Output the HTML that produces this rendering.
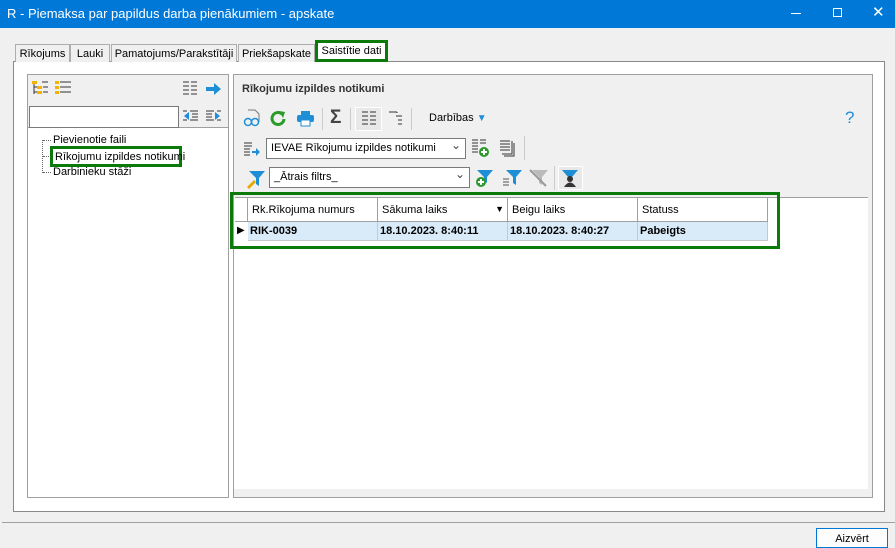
<!DOCTYPE html><html><head><meta charset="utf-8"><style>
*{box-sizing:border-box}body{margin:0;width:895px;height:544px;overflow:hidden;background:#f0f0f0;font-family:"Liberation Sans",sans-serif;font-size:11px;color:#000;position:relative;white-space:nowrap}
.a{position:absolute}
.tab{position:absolute;top:44px;height:18px;border:1px solid #adadad;border-bottom:none;background:#f0f0f0;padding:3px 0;font-size:11px;text-align:center}
.cb{position:absolute;background:#fff;border:1px solid #7a7a7a;height:21px;padding:3px 4px;font-size:11px;overflow:hidden}
.cb:after{content:"⌄";position:absolute;right:4px;top:-1px;font-size:12px;color:#444}
.th{position:absolute;top:198px;height:24px;border-right:1px solid #a0a0a0;padding:6px 4px;font-size:11px}
.td{position:absolute;top:222px;height:18px;padding:3px 2px;font-size:11px;font-weight:bold;border-right:1px solid #c8c8c8}
</style></head><body>
<div class="a" style="left:0;top:0;width:895px;height:28px;background:#0078d7;color:#fff;font-size:13px;padding:6px 7px">R - Piemaksa par papildus darba pienākumiem - apskate</div>
<div class="a" style="left:791px;top:13px;width:10px;height:1px;background:#fff"></div>
<div class="a" style="left:833px;top:8px;width:9px;height:9px;border:1px solid #fff"></div>
<div class="a" style="left:872px;top:3px;color:#fff;font-size:15px">✕</div>

<div class="a" style="left:13px;top:61px;width:872px;height:451px;background:#fff;border:1px solid #898989"></div>
<div class="tab" style="left:15px;width:55px">Rīkojums</div>
<div class="tab" style="left:70px;width:40px">Lauki</div>
<div class="tab" style="left:111px;width:126px">Pamatojums/Parakstītāji</div>
<div class="tab" style="left:238px;width:77px">Priekšapskate</div>
<div class="a" style="left:315px;top:40px;width:73px;height:22px;background:#fff;border:3px solid #0a7a0a;padding:2px 0;text-align:center;font-size:11px">Saistītie dati</div>

<!-- left panel -->
<div class="a" style="left:27px;top:74px;width:202px;height:424px;border:1px solid #a0a0a0;background:#f0f0f0"></div>
<div class="a" style="left:28px;top:127px;width:200px;height:370px;background:#fff;border-top:1px solid #a0a0a0"></div>
<div class="a" style="left:32px;top:80px;width:16px;height:16px"><svg width="16" height="16"><rect x="0" y="1" width="5" height="3" fill="#f2b400"/><rect x="5" y="6" width="5" height="3" fill="#f2b400"/><rect x="5" y="11" width="5" height="3" fill="#f2b400"/><path d="M2 4v10M2 7h3M2 12h3M10 2h6M11 7h5M11 12h5" stroke="#333"/></svg></div>
<div class="a" style="left:55px;top:80px"><svg width="16" height="16"><rect x="0" y="1" width="4" height="3" fill="#f2b400"/><rect x="0" y="6" width="4" height="3" fill="#f2b400"/><rect x="0" y="11" width="4" height="3" fill="#f2b400"/><path d="M5 2h11M5 7h11M5 12h11" stroke="#333"/></svg></div>
<div class="a" style="left:182px;top:81px"><svg width="16" height="14"><path d="M1 1h6M1 5h6M1 9h6M1 13h6M9 1h6M9 5h6M9 9h6M9 13h6" stroke="#333"/></svg></div>
<div class="a" style="left:206px;top:83px"><svg width="16" height="12"><path d="M0 4h8V0l7 6-7 6V8H0z" fill="#1e8fd6"/></svg></div>
<div class="a" style="left:29px;top:106px;width:150px;height:22px;background:#fff;border:1px solid #7a7a7a"></div>
<div class="a" style="left:182px;top:110px"><svg width="16" height="12"><path d="M8 1h8M10 4h6M10 7h6M8 10h8M1 1h4M1 10h4" stroke="#333"/><path d="M7 2v8L2 6z" fill="#1e8fd6"/></svg></div>
<div class="a" style="left:206px;top:110px"><svg width="16" height="12"><path d="M0 1h8M0 4h6M0 7h6M0 10h8M11 1h4M11 10h4" stroke="#333"/><path d="M9 2v8l5-4z" fill="#1e8fd6"/></svg></div>
<div class="a" style="left:42px;top:140px;width:1px;height:33px;border-left:1px dotted #666"></div>
<div class="a" style="left:43px;top:140px;width:8px;border-top:1px dotted #666"></div>
<div class="a" style="left:43px;top:156px;width:8px;border-top:1px dotted #666"></div>
<div class="a" style="left:43px;top:172px;width:8px;border-top:1px dotted #666"></div>
<div class="a" style="left:53px;top:134px">Pievienotie faili</div>
<div class="a" style="left:50px;top:146px;width:132px;height:21px;border:3px solid #0a7a0a;padding:1px 2px;line-height:14px">Rīkojumu izpildes notikumi</div>
<div class="a" style="left:53px;top:166px">Darbinieku stāži</div>

<!-- right panel -->
<div class="a" style="left:233px;top:74px;width:640px;height:424px;border:1px solid #a0a0a0;background:#fff"></div>
<div class="a" style="left:234px;top:98px;width:634px;height:99px;background:#f0f0f0"></div>
<div class="a" style="left:234px;top:75px;width:638px;height:23px;background:#f0f0f0"></div>
<div class="a" style="left:242px;top:83px;font-weight:bold;color:#333">Rīkojumu izpildes notikumi</div>
<div class="a" style="left:234px;top:489px;width:638px;height:8px;background:#f0f0f0"></div>
<div class="a" style="left:868px;top:98px;width:4px;height:392px;background:#f0f0f0"></div>

<div class="a" style="left:243px;top:109px"><svg width="18" height="18"><path d="M5 1h7l4 4v8" fill="none" stroke="#777"/><circle cx="5" cy="13" r="3.5" fill="none" stroke="#1e8fd6" stroke-width="1.5"/><circle cx="12" cy="13" r="3.5" fill="none" stroke="#1e8fd6" stroke-width="1.5"/></svg></div>
<div class="a" style="left:270px;top:110px"><svg width="17" height="17"><path d="M14 9a6 6 0 1 1-2-5" fill="none" stroke="#2a9a2a" stroke-width="3"/><path d="M9 1l6 1-2 6z" fill="#2a9a2a"/></svg></div>
<div class="a" style="left:297px;top:110px"><svg width="17" height="17"><rect x="4" y="1" width="9" height="4" fill="#1e8fd6"/><rect x="0" y="5" width="17" height="7" rx="2" fill="#1e8fd6"/><rect x="4" y="10" width="9" height="6" fill="#fff" stroke="#1e8fd6"/></svg></div>
<div class="a" style="left:322px;top:108px;width:1px;height:22px;background:#ccc"></div>
<div class="a" style="left:330px;top:107px;font-size:19px;font-weight:bold;color:#444">Σ</div>
<div class="a" style="left:350px;top:108px;width:1px;height:22px;background:#ccc"></div>
<div class="a" style="left:355px;top:107px;width:27px;height:24px;border:1px solid #fff;background:#e8e8e8"></div>
<div class="a" style="left:361px;top:111px"><svg width="16" height="14"><path d="M1 1h6M1 5h6M1 9h6M1 13h6M9 1h6M9 5h6M9 9h6M9 13h6" stroke="#333"/></svg></div>
<div class="a" style="left:388px;top:111px"><svg width="16" height="16"><path d="M1 1h8M9 1v1M8 5h6M10 9h4M10 13h4" stroke="#333"/></svg></div>
<div class="a" style="left:411px;top:108px;width:1px;height:22px;background:#ccc"></div>
<div class="a" style="left:429px;top:112px">Darbības <span style="color:#1e8fd6;font-size:10px">▼</span></div>
<div class="a" style="left:845px;top:108px;font-size:17px;color:#1e8fd6">?</div>

<div class="a" style="left:243px;top:141px"><svg width="18" height="16"><path d="M1 2h8M1 5h8M1 8h6M1 11h6M1 14h6" stroke="#333"/><path d="M9 10h4V7l4 4-4 4v-3H9z" fill="#1e8fd6"/></svg></div>
<div class="cb" style="left:266px;top:138px;width:200px">IEVAE Rīkojumu izpildes notikumi</div>
<div class="a" style="left:471px;top:138px"><svg width="20" height="20"><path d="M1 2h6M1 5h6M1 8h6M1 11h6M1 14h6M9 2h6M9 5h6" stroke="#333"/><circle cx="13" cy="14" r="5" fill="#2a9a2a"/><path d="M13 11v6M10 14h6" stroke="#fff" stroke-width="2"/></svg></div>
<div class="a" style="left:499px;top:139px"><svg width="18" height="18"><path d="M1 2h10M1 5h10M1 8h10M1 11h10M13 2v13H3" stroke="#333" fill="none"/><path d="M15 4v13H5" stroke="#333" fill="none"/></svg></div>
<div class="a" style="left:524px;top:136px;width:1px;height:24px;background:#ccc"></div>

<div class="a" style="left:246px;top:169px"><svg width="20" height="20"><path d="M3 2h16l-6 7v8l-3-2V9z" fill="#1e8fd6"/><path d="M1 18l7-7 2 2-7 7z" fill="#e8a800"/></svg></div>
<div class="cb" style="left:269px;top:167px;width:201px">_Ātrais filtrs_</div>
<div class="a" style="left:475px;top:168px"><svg width="20" height="20"><path d="M2 2h16l-6 7v6l-3-2V9z" fill="#1e8fd6"/><circle cx="6" cy="14" r="5" fill="#2a9a2a"/><path d="M6 11v6M3 14h6" stroke="#fff" stroke-width="2"/></svg></div>
<div class="a" style="left:502px;top:168px"><svg width="20" height="20"><path d="M4 2h16l-6 7v8l-3-2V9z" fill="#1e8fd6"/><path d="M1 11h6M1 14h6M1 17h6" stroke="#555"/></svg></div>
<div class="a" style="left:528px;top:168px"><svg width="20" height="20"><path d="M4 2h16l-6 7v8l-3-2V9z" fill="#bbb"/><path d="M2 2l16 16" stroke="#999" stroke-width="2"/></svg></div>
<div class="a" style="left:554px;top:166px;width:1px;height:24px;background:#ccc"></div>
<div class="a" style="left:558px;top:166px;width:25px;height:24px;border:1px solid #fff;background:#e8e8e8"></div>
<div class="a" style="left:561px;top:169px"><svg width="18" height="18"><path d="M1 1h16l-6 7v3H7V8z" fill="#1e8fd6"/><circle cx="9" cy="10" r="3" fill="#333"/><path d="M3 18q6-9 12 0z" fill="#333"/></svg></div>

<!-- grid -->
<div class="a" style="left:235px;top:197px;width:633px;height:1px;background:#a0a0a0"></div>
<div class="a" style="left:235px;top:198px;width:533px;height:43px;border-right:1px solid #a0a0a0"></div>
<div class="a" style="left:235px;top:198px;width:13px;height:24px;border-right:1px solid #a0a0a0"></div>
<div class="th" style="left:248px;width:130px">Rk.Rīkojuma numurs</div>
<div class="th" style="left:378px;width:130px">Sākuma laiks<span style="position:absolute;right:3px;top:6px;font-size:9px">▼</span></div>
<div class="th" style="left:508px;width:130px">Beigu laiks</div>
<div class="th" style="left:638px;width:130px">Statuss</div>
<div class="a" style="left:235px;top:221px;width:533px;height:1px;background:#a0a0a0"></div>
<div class="a" style="left:248px;top:222px;width:520px;height:18px;background:#d9ebf9"></div>
<div class="a" style="left:237px;top:225px;font-size:10px">▶</div>
<div class="td" style="left:248px;width:130px">RIK-0039</div>
<div class="td" style="left:378px;width:130px">18.10.2023. 8:40:11</div>
<div class="td" style="left:508px;width:130px">18.10.2023. 8:40:27</div>
<div class="td" style="left:638px;width:130px">Pabeigts</div>
<div class="a" style="left:248px;top:240px;width:520px;height:1px;background:#c8c8c8"></div>
<div class="a" style="left:230px;top:192px;width:550px;height:57px;border:3px solid #0a7a0a"></div>

<div class="a" style="left:2px;top:522px;width:893px;height:1px;background:#a0a0a0"></div>
<div class="a" style="left:816px;top:528px;width:72px;height:20px;border:1px solid #0078d7;background:#fdfdfd;text-align:center;padding-top:4px">Aizvērt</div>
</body></html>
